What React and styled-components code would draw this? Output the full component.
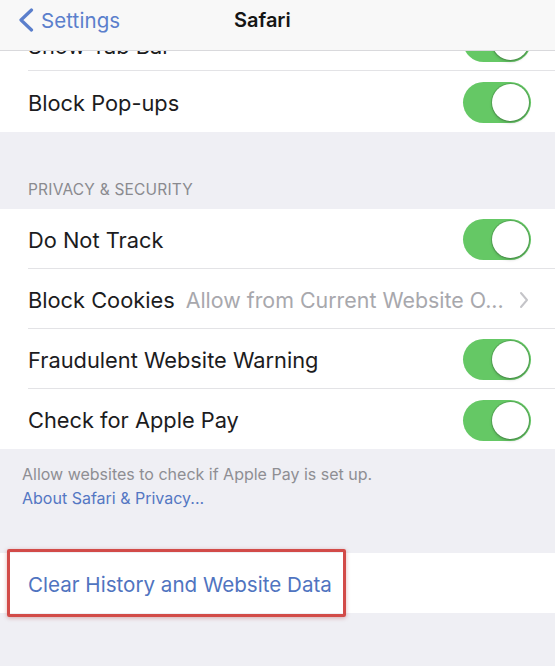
import styled, { createGlobalStyle } from 'styled-components'

const GlobalStyle = createGlobalStyle`
	html, body {
		margin: 0;
		padding: 0;
		background: #efeff4;
	}
	body {
		font-family: Inter, 'Liberation Sans', sans-serif;
		-webkit-font-smoothing: antialiased;
	}
`

const Screen = styled.div`
	width: 555px;
	height: 666px;
	overflow: hidden;
	background: #efeff4;
`

const NavBar = styled.div`
	height: 51px;
	box-sizing: border-box;
	display: grid;
	grid-template-columns: 1fr auto 1.14fr;
	align-items: center;
	padding: 0 18px 10px;
	background: #f8f8f8;
	border-bottom: 1px solid #d9d9dc;
`

const BackButton = styled.div`
	display: flex;
	align-items: center;
	gap: 7px;
	color: #5b7fcc;
	font-size: 20.5px;
	letter-spacing: 0.1px;
`

const Title = styled.div`
	font-size: 20px;
	font-weight: 600;
	color: #151515;
`

const Group = styled.div`
	background: #fff;
`

// the row scrolled mostly under the nav bar: only its lower sliver shows
const ScrolledOff = styled.div`
	height: 20px;
	overflow: hidden;
	display: flex;
	flex-direction: column;
	justify-content: flex-end;
`

const Row = styled.div`
	position: relative;
	padding-left: 28px;
	background: #fff;
	flex: none;
`

const RowBody = styled.div`
	height: ${p => p.$h || 60}px;
	display: flex;
	align-items: center;
	justify-content: space-between;
	padding: 2px 24px 0 0;
	box-sizing: border-box;
	border-bottom: ${p => (p.$last ? 'none' : '1px solid #e3e3e6')};
`

const Label = styled.span`
	font-size: 21.8px;
	color: #1c1c1e;
	white-space: nowrap;
	padding-top: ${p => p.$drop || 0}px;
`

const Detail = styled.span`
	flex: 1;
	margin-left: 11px;
	font-size: 21.4px;
	color: #a8a8ad;
	white-space: nowrap;
	overflow: hidden;
`

const Chevron = styled.svg`
	margin-left: 12px;
	margin-right: 2px;
	flex: none;
`

const Toggle = styled.div`
	width: 68px;
	height: 41px;
	border-radius: 21px;
	background: #65c865;
	display: flex;
	align-items: center;
	justify-content: flex-end;
	padding: 2px;
	box-sizing: border-box;
	flex: none;
`

const Knob = styled.div`
	width: 37px;
	height: 37px;
	border-radius: 50%;
	background: #fff;
	box-shadow: 0 0 0 1px rgba(0, 0, 0, 0.14), 0 2px 3px rgba(0, 0, 0, 0.18);
`

const SectionHeader = styled.div`
	padding: 48px 28px 10px;
	font-size: 15.5px;
	letter-spacing: 0.2px;
	color: #8a8a8f;
	text-transform: uppercase;
`

const Footer = styled.div`
	padding: 13px 22px 0;
	font-size: 16px;
	line-height: 24px;
	color: #8e8e93;
	height: 104px;
	box-sizing: border-box;
`

const FooterLink = styled.div`
	color: #5477c3;
`

const ActionLabel = styled.span`
	font-size: 20.6px;
	color: #5074c0;
`

const Highlight = styled.div`
	position: absolute;
	left: 7px;
	top: -4px;
	width: 339px;
	height: 68px;
	box-sizing: border-box;
	border: 3px solid #d24b48;
	border-radius: 2px;
	box-shadow: 0 1px 4px rgba(160, 40, 40, 0.35);
	pointer-events: none;
`

function Switch() {
	return (
		<Toggle>
			<Knob />
		</Toggle>
	)
}

const privacyRows = [
	{ label: 'Do Not Track', toggle: true },
	{ label: 'Block Cookies', detail: 'Allow from Current Website O...' },
	{ label: 'Fraudulent Website Warning', toggle: true },
	{ label: 'Check for Apple Pay', toggle: true },
]

export default function App() {
	return (
		<Screen>
			<GlobalStyle />
			<NavBar>
				<BackButton>
					<svg width="16" height="24" viewBox="0 0 16 24">
						<path d="M13.5 2 L3 12 L13.5 22" fill="none" stroke="#5b7fcc" strokeWidth="3.2" strokeLinecap="round" strokeLinejoin="round" />
					</svg>
					Settings
				</BackButton>
				<Title>Safari</Title>
				<div />
			</NavBar>

			<Group>
				<ScrolledOff>
					<Row>
						<RowBody>
							<Label $drop={9}>Show Tab Bar</Label>
							<Switch />
						</RowBody>
					</Row>
				</ScrolledOff>
				<Row>
					<RowBody $last $h={61}>
						<Label>Block Pop-ups</Label>
						<Switch />
					</RowBody>
				</Row>
			</Group>

			<SectionHeader>Privacy &amp; Security</SectionHeader>
			<Group>
				{privacyRows.map((r, i) => (
					<Row key={r.label}>
						<RowBody $last={i === privacyRows.length - 1}>
							<Label>{r.label}</Label>
							{r.detail && <Detail>{r.detail}</Detail>}
							{r.toggle ? (
								<Switch />
							) : (
								<Chevron width="10" height="18" viewBox="0 0 10 18">
									<path d="M2 2 L8 9 L2 16" fill="none" stroke="#c4c4c8" strokeWidth="2" strokeLinecap="round" strokeLinejoin="round" />
								</Chevron>
							)}
						</RowBody>
					</Row>
				))}
			</Group>
			<Footer>
				Allow websites to check if Apple Pay is set up.
				<FooterLink>About Safari &amp; Privacy...</FooterLink>
			</Footer>

			<Group>
				<Row>
					<RowBody $last>
						<ActionLabel>Clear History and Website Data</ActionLabel>
					</RowBody>
					<Highlight />
				</Row>
			</Group>
		</Screen>
	)
}
